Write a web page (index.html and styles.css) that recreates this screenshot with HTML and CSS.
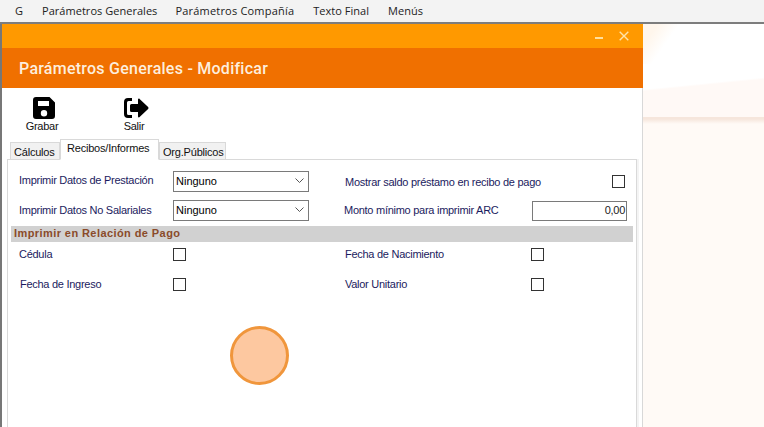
FILE: index.html
```html
<!DOCTYPE html>
<html lang="es">
<head>
<meta charset="utf-8">
<title>Parámetros Generales - Modificar</title>
<link rel="stylesheet" href="styles.css">
</head>
<body>
<nav class="menubar">
  <span class="menu-item first">G</span>
  <span class="menu-item">Parámetros Generales</span>
  <span class="menu-item wide">Parámetros Compañía</span>
  <span class="menu-item spaced">Texto Final</span>
  <span class="menu-item">Menús</span>
</nav>
<div class="workspace">
  <section class="window">
    <div class="titlebar">
      <span class="win-min"></span>
      <svg class="win-close" width="10" height="10" viewBox="0 0 10 10"><path d="M.7.7l8.600 8.600M9.300.7L.7 9.300" fill="none" stroke="#ffe3a8" stroke-width="1.400"/></svg>
    </div>
    <header class="heading">Parámetros Generales - Modificar</header>
    <div class="toolbar">
      <div class="tool tool-save">
        <svg class="icon" width="24" height="24" viewBox="0 0 24 24"><path fill="#000" fill-rule="evenodd" d="M4 1h13.500L23 6.500V20a3 3 0 0 1-3 3H4a3 3 0 0 1-3-3V4a3 3 0 0 1 3-3zM6 5v5h11V5zm6 9a3.200 3.200 0 1 0 0 6.400a3.200 3.200 0 0 0 0-6.400z"/></svg>
        <span>Grabar</span>
      </div>
      <div class="tool tool-exit">
        <svg class="icon" width="26" height="24" viewBox="0 0 26 24"><path fill="#000" d="M9 2H5a4 4 0 0 0-4 4v12a4 4 0 0 0 4 4h4v-3H5.500A1.500 1.500 0 0 1 4 17.500v-11A1.500 1.500 0 0 1 5.500 5H9z"/><path fill="#000" d="M15 3.500c0-.8 1-1.200 1.600-.6l8.500 8.200c.5.500.5 1.300 0 1.800l-8.500 8.200c-.6.600-1.600.2-1.600-.6V16H8.500A1.500 1.500 0 0 1 7 14.500v-5A1.500 1.500 0 0 1 8.500 8H15z"/></svg>
        <span>Salir</span>
      </div>
    </div>
    <div class="tabs">
      <span class="tab">Cálculos</span>
      <span class="tab active">Recibos/Informes</span>
      <span class="tab">Org.Públicos</span>
    </div>
    <div class="panel">
      <div class="form-row">
        <label class="label raised">Imprimir Datos de Prestación</label>
        <div class="combo"><span>Ninguno</span><svg width="9" height="6" viewBox="0 0 9 6"><path d="M.5.5 4.500 4.500 8.500.5" fill="none" stroke="#555" stroke-width="1"/></svg></div>
        <label class="label right lowered">Mostrar saldo préstamo en recibo de pago</label>
        <span class="check far"></span>
      </div>
      <div class="form-row">
        <label class="label">Imprimir Datos No Salariales</label>
        <div class="combo"><span>Ninguno</span><svg width="9" height="6" viewBox="0 0 9 6"><path d="M.5.5 4.500 4.500 8.500.5" fill="none" stroke="#555" stroke-width="1"/></svg></div>
        <label class="label right nudge-left">Monto mínimo para imprimir ARC</label>
        <div class="amount">0,00</div>
      </div>
      <h2 class="band">Imprimir en Relación de Pago</h2>
      <div class="form-row check-row">
        <label class="label">Cédula</label>
        <span class="check"></span>
        <label class="label right">Fecha de Nacimiento</label>
        <span class="check"></span>
      </div>
      <div class="form-row check-row">
        <label class="label nudge-right">Fecha de Ingreso</label>
        <span class="check"></span>
        <label class="label right">Valor Unitario</label>
        <span class="check"></span>
      </div>
    </div>
    <div class="pointer"></div>
  </section>
  <div class="desktop"></div>
</div>
</body>
</html>
```

FILE: styles.css
```css
* { box-sizing: border-box; }
html, body { margin: 0; height: 427px; overflow: hidden; background: #fff; }
body { display: flex; flex-direction: column; font-family: "Liberation Sans", Arial, sans-serif; font-size: 11px; letter-spacing: -.27px; color: #000; }

.menubar { height: 24px; flex: none; display: flex; align-items: center; gap: 18px; padding: 0 0 1px 15px; background: #f3f3f3; border-bottom: 2px solid #7d7d7d; font-family: "Open Sans", sans-serif; font-size: 11px; letter-spacing: .03px; color: #222; }
.menu-item.first { padding-right: 1px; }
.menu-item.wide { letter-spacing: .2px; margin-right: 1px; }
.menu-item.spaced { margin-right: 1px; }

.workspace { flex: 1; display: flex; min-height: 0; }
.window { position: relative; width: 643px; flex: none; display: flex; flex-direction: column; background: #fff; border-left: 2px solid #777; border-right: 1px solid #d8d8d8; }

.titlebar { height: 24px; flex: none; display: flex; justify-content: flex-end; align-items: center; gap: 16px; padding-right: 14px; margin-right: -1px; background: #ff9900; }
.win-min { width: 8px; height: 2px; margin-top: 4px; background: #ffdf9c; }
.win-close { display: block; margin-bottom: 1px; }
.heading { height: 40px; flex: none; display: flex; align-items: center; padding-left: 17px; margin-right: -1px; background: #f07000; color: #fdeedd; font-family: Roboto, sans-serif; font-weight: 500; font-size: 16px; letter-spacing: .25px; }

.toolbar { height: 51px; flex: none; display: flex; padding-top: 8px; }
.tool { display: flex; flex-direction: column; align-items: center; color: #111; line-height: 12px; }
.tool .icon { display: block; margin-left: 4px; }
.tool-save { width: 46px; margin-left: 17px; }
.tool-exit { width: 46px; margin-left: 46px; }

.tabs { height: 20px; flex: none; display: flex; align-items: flex-end; padding-left: 8px; position: relative; z-index: 1; letter-spacing: -.2px; }
.tab { height: 17px; width: 50px; padding: 3px 0 0 3px; background: #f1f1f1; border: 1px solid #d9d9d9; border-bottom: 0; color: #111; }
.tab.active { width: 99px; height: 21px; padding: 2px 0 0 6px; background: #fff; border-bottom: 1px solid #fff; margin-bottom: -1px; }
.tab:last-child { width: 67px; padding-left: 3px; }

.panel { flex: 1; width: 630px; margin-left: 5px; border: 1px solid #d9d9d9; border-bottom: 0; padding-top: 11px; box-shadow: 2px 0 0 #f4f4f4; }
.form-row { display: grid; grid-template-columns: 154px 136px 36px 186px 1fr; align-items: center; height: 21px; margin-bottom: 8px; padding-left: 11px; }
.form-row.check-row { margin-bottom: 9px; }
.label { color: #1b1b5e; padding-bottom: 1px; white-space: nowrap; }
.label.raised { padding-bottom: 3px; }
.label.lowered { padding-bottom: 0; }
.label.right { grid-column: 4; }
.label.nudge-right { padding-left: 1px; }
.label.nudge-left { margin-left: -1px; }

.combo { grid-column: 2; height: 21px; display: flex; align-items: center; justify-content: space-between; padding: 0 4px 2px 2px; border: 1px solid #7a7a7a; background: #fff; letter-spacing: 0; }
.amount { height: 20px; width: 95px; margin-left: 1px; padding: 2px 1px 0 0; text-align: right; border: 1px solid #7a7a7a; color: #222; }

.check { display: block; width: 13px; height: 13px; border: 1px solid #333; background: #fff; }
.form-row .check:nth-child(2) { grid-column: 2; }
.check.far { grid-column: 5; margin-left: 81px; }

.band { margin: -3px 3px 2px; width: 622px; height: 16px; padding: 0 0 0 3px; background: #d1d1d1; color: #8a4b2a; font-size: 11px; line-height: 15px; font-weight: bold; letter-spacing: .42px; }

.pointer { position: absolute; left: 228px; top: 302px; width: 59px; height: 59px; border-radius: 50%; background: #fdc8a0; border: 3px solid #f0963c; }

.desktop { flex: 1; background:
  linear-gradient(125deg, #fff6ec 0 12px, #fff 30px) 0 0 / 40px 40px no-repeat,
  linear-gradient(180deg, transparent 0 93px, #f6e6dc 93px 95px, #fffaf6 100px),
  linear-gradient(174.300deg, #fff 65px, #fff9f6 67px); }
```
